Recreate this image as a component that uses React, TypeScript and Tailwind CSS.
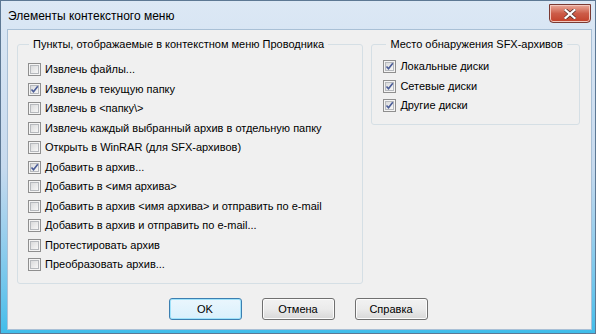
import React from 'react'

const leftItems = [
  { label: 'Извлечь файлы...', checked: false },
  { label: 'Извлечь в текущую папку', checked: true },
  { label: 'Извлечь в <папку\\>', checked: false },
  { label: 'Извлечь каждый выбранный архив в отдельную папку', checked: false },
  { label: 'Открыть в WinRAR (для SFX-архивов)', checked: false },
  { label: 'Добавить в архив...', checked: true },
  { label: 'Добавить в <имя архива>', checked: false },
  { label: 'Добавить в архив <имя архива> и отправить по e-mail', checked: false },
  { label: 'Добавить в архив и отправить по e-mail...', checked: false },
  { label: 'Протестировать архив', checked: false },
  { label: 'Преобразовать архив...', checked: false },
]

const rightItems = ['Локальные диски', 'Сетевые диски', 'Другие диски']

const CheckBox = ({ checked }: { checked: boolean }) => (
  <div className="w-[13px] h-[13px] border border-[#8f8f8f] bg-[#f4f4f4] p-[1px] flex-shrink-0">
    <div className="relative w-full h-full border border-[#b6b9bd] bg-gradient-to-br from-[#dadbdc] to-[#f7f7f7]">
      {checked && (
        <svg className="absolute -left-[1px] -top-[1px]" width="9" height="9" viewBox="0 0 9 9">
          <path d="M1.5 4.5 L3.5 6.8 L7.8 1.2" fill="none" stroke="#4b5d98" strokeWidth="1.6" />
        </svg>
      )}
    </div>
  </div>
)

const Row = ({ label, checked }: { label: string; checked: boolean }) => (
  <div className="flex items-center gap-[4px] h-[19.5px]">
    <CheckBox checked={checked} />
    <span className="whitespace-pre leading-none">{label}</span>
  </div>
)

const Button = ({ label, primary }: { label: string; primary?: boolean }) => (
  <button
    className={
      primary
        ? 'w-[73px] h-[22px] rounded-[3px] border border-[#3c7fb1] bg-gradient-to-b from-[#eaf6fd] to-[#d9f0fc] shadow-[inset_0_0_0_1px_#9fe2fa] text-black'
        : 'w-[73px] h-[22px] rounded-[3px] border border-[#707070] bg-gradient-to-b from-[#f2f2f2] via-[#ebebeb] to-[#d8d8d8] shadow-[inset_0_0_0_1px_#fcfcfc] text-black'
    }
  >
    {label}
  </button>
)

export default function App() {
  return (
    <div
      className="w-[596px] h-[334px] flex flex-col border border-[#5d7894] bg-gradient-to-b from-[#dce8f5] via-[#c7daee] to-[#3fbdea] text-[11px] text-black"
      style={{ fontFamily: '"Liberation Sans", Arial, sans-serif' }}
    >
      {/* Title bar */}
      <div className="h-[28px] flex items-center justify-between pl-[7px] pr-[4px]">
        <span className="text-[12px] mt-[1px]">Элементы контекстного меню</span>
        <div className="w-[42px] h-[19px] mb-[3px] rounded-b-[4px] border border-[#7a3a33] bg-gradient-to-b from-[#e9a99a] via-[#cc5c48] to-[#c23f28] shadow-[inset_0_0_0_1px_#f3c7bd] flex items-center justify-center">
          <svg width="12" height="10" viewBox="0 0 12 10">
            <path d="M1.5 1 L10.5 9 M10.5 1 L1.5 9" stroke="#4b2a26" strokeWidth="3.6" strokeLinecap="square" />
            <path d="M1.5 1 L10.5 9 M10.5 1 L1.5 9" stroke="#ffffff" strokeWidth="2.2" strokeLinecap="square" />
          </svg>
        </div>
      </div>

      {/* Client area */}
      <div className="flex-1 ml-[6px] mr-[3px] mb-[3px] bg-[#f0f0f0] border border-[#a9c0d6] flex flex-col">
        <div className="flex gap-[8px] pl-[9px] pr-[11px] pt-[7px]">
          <fieldset className="w-[347px] h-[247px] border border-[#d5dfe5] rounded-[3px] pl-[10px]">
            <legend className="ml-[1px] px-[4px] leading-[14px] whitespace-nowrap">Пункты, отображаемые в контекстном меню Проводника</legend>
            <div className="flex flex-col pt-[9px]">
              {leftItems.map((item, i) => (
                <Row key={i} label={item.label} checked={item.checked} />
              ))}
            </div>
          </fieldset>
          <fieldset className="w-[209px] h-[88px] border border-[#d5dfe5] rounded-[3px] pl-[11px]">
            <legend className="ml-[3px] px-[4px] leading-[14px] whitespace-nowrap">Место обнаружения SFX-архивов</legend>
            <div className="flex flex-col pt-[6px]">
              {rightItems.map((label) => (
                <Row key={label} label={label} checked />
              ))}
            </div>
          </fieldset>
        </div>

        <div className="mt-auto mb-[9px] flex justify-center gap-[20px] pr-[3px]">
          <Button label="OK" primary />
          <Button label="Отмена" />
          <Button label="Справка" />
        </div>
      </div>
    </div>
  )
}
